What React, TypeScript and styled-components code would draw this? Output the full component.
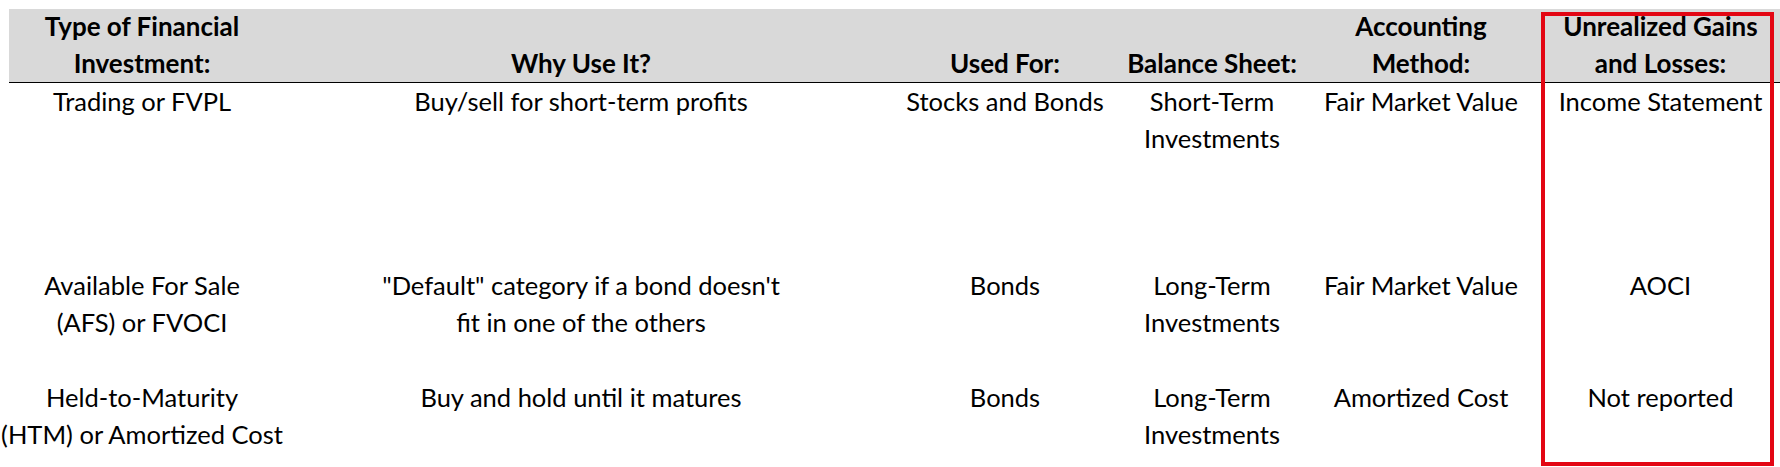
import React from 'react'
import styled, { createGlobalStyle } from 'styled-components'

const GlobalStyle = createGlobalStyle`
  html, body {
    margin: 0;
    padding: 0;
    background: #ffffff;
  }
  body {
    font-family: Lato, "Open Sans", "Liberation Sans", sans-serif;
    color: #000000;
  }
`

const Page = styled.div`
  position: relative;
  width: 1780px;
  height: 467px;
  padding: 9px 0 0 9px;
  box-sizing: border-box;
  overflow: hidden;
`

const Sheet = styled.div`
  display: grid;
  grid-template-columns: 266px 612px 236px 178px 240px 239px;
  grid-template-rows: 74px 184px 112px 87px;
`

const HeadCell = styled.div`
  display: flex;
  flex-direction: column;
  justify-content: flex-end;
  align-items: center;
  background: #d9d9d9;
  border-bottom: 1px solid #000000;
  font-weight: 700;
  font-size: 26px;
  line-height: 37px;
  text-align: center;
  white-space: nowrap;
`

const BodyCell = styled.div`
  display: flex;
  flex-direction: column;
  align-items: center;
  font-size: 25.5px;
  line-height: 37px;
  text-align: center;
  white-space: nowrap;
`

const Line = styled.span`
  display: block;
`

const Highlight = styled.div`
  position: absolute;
  left: 1541px;
  top: 12px;
  width: 233px;
  height: 454px;
  box-sizing: border-box;
  border: 4px solid #e30613;
  pointer-events: none;
`

const headers: string[][] = [
  ['Type of Financial', 'Investment:'],
  ['Why Use It?'],
  ['Used For:'],
  ['Balance Sheet:'],
  ['Accounting', 'Method:'],
  ['Unrealized Gains', 'and Losses:'],
]

const rows: string[][][] = [
  [
    ['Trading or FVPL'],
    ['Buy/sell for short-term profits'],
    ['Stocks and Bonds'],
    ['Short-Term', 'Investments'],
    ['Fair Market Value'],
    ['Income Statement'],
  ],
  [
    ['Available For Sale', '(AFS) or FVOCI'],
    ['"Default" category if a bond doesn\'t', 'fit in one of the others'],
    ['Bonds'],
    ['Long-Term', 'Investments'],
    ['Fair Market Value'],
    ['AOCI'],
  ],
  [
    ['Held-to-Maturity', '(HTM) or Amortized Cost'],
    ['Buy and hold until it matures'],
    ['Bonds'],
    ['Long-Term', 'Investments'],
    ['Amortized Cost'],
    ['Not reported'],
  ],
]

export default function App() {
  return (
    <>
      <GlobalStyle />
      <Page>
        <Sheet>
          {headers.map((lines, i) => (
            <HeadCell key={`h${i}`}>
              {lines.map((l) => (
                <Line key={l}>{l}</Line>
              ))}
            </HeadCell>
          ))}
          {rows.map((row, r) =>
            row.map((lines, c) => (
              <BodyCell key={`r${r}c${c}`}>
                {lines.map((l) => (
                  <Line key={l}>{l}</Line>
                ))}
              </BodyCell>
            ))
          )}
        </Sheet>
        <Highlight />
      </Page>
    </>
  )
}
